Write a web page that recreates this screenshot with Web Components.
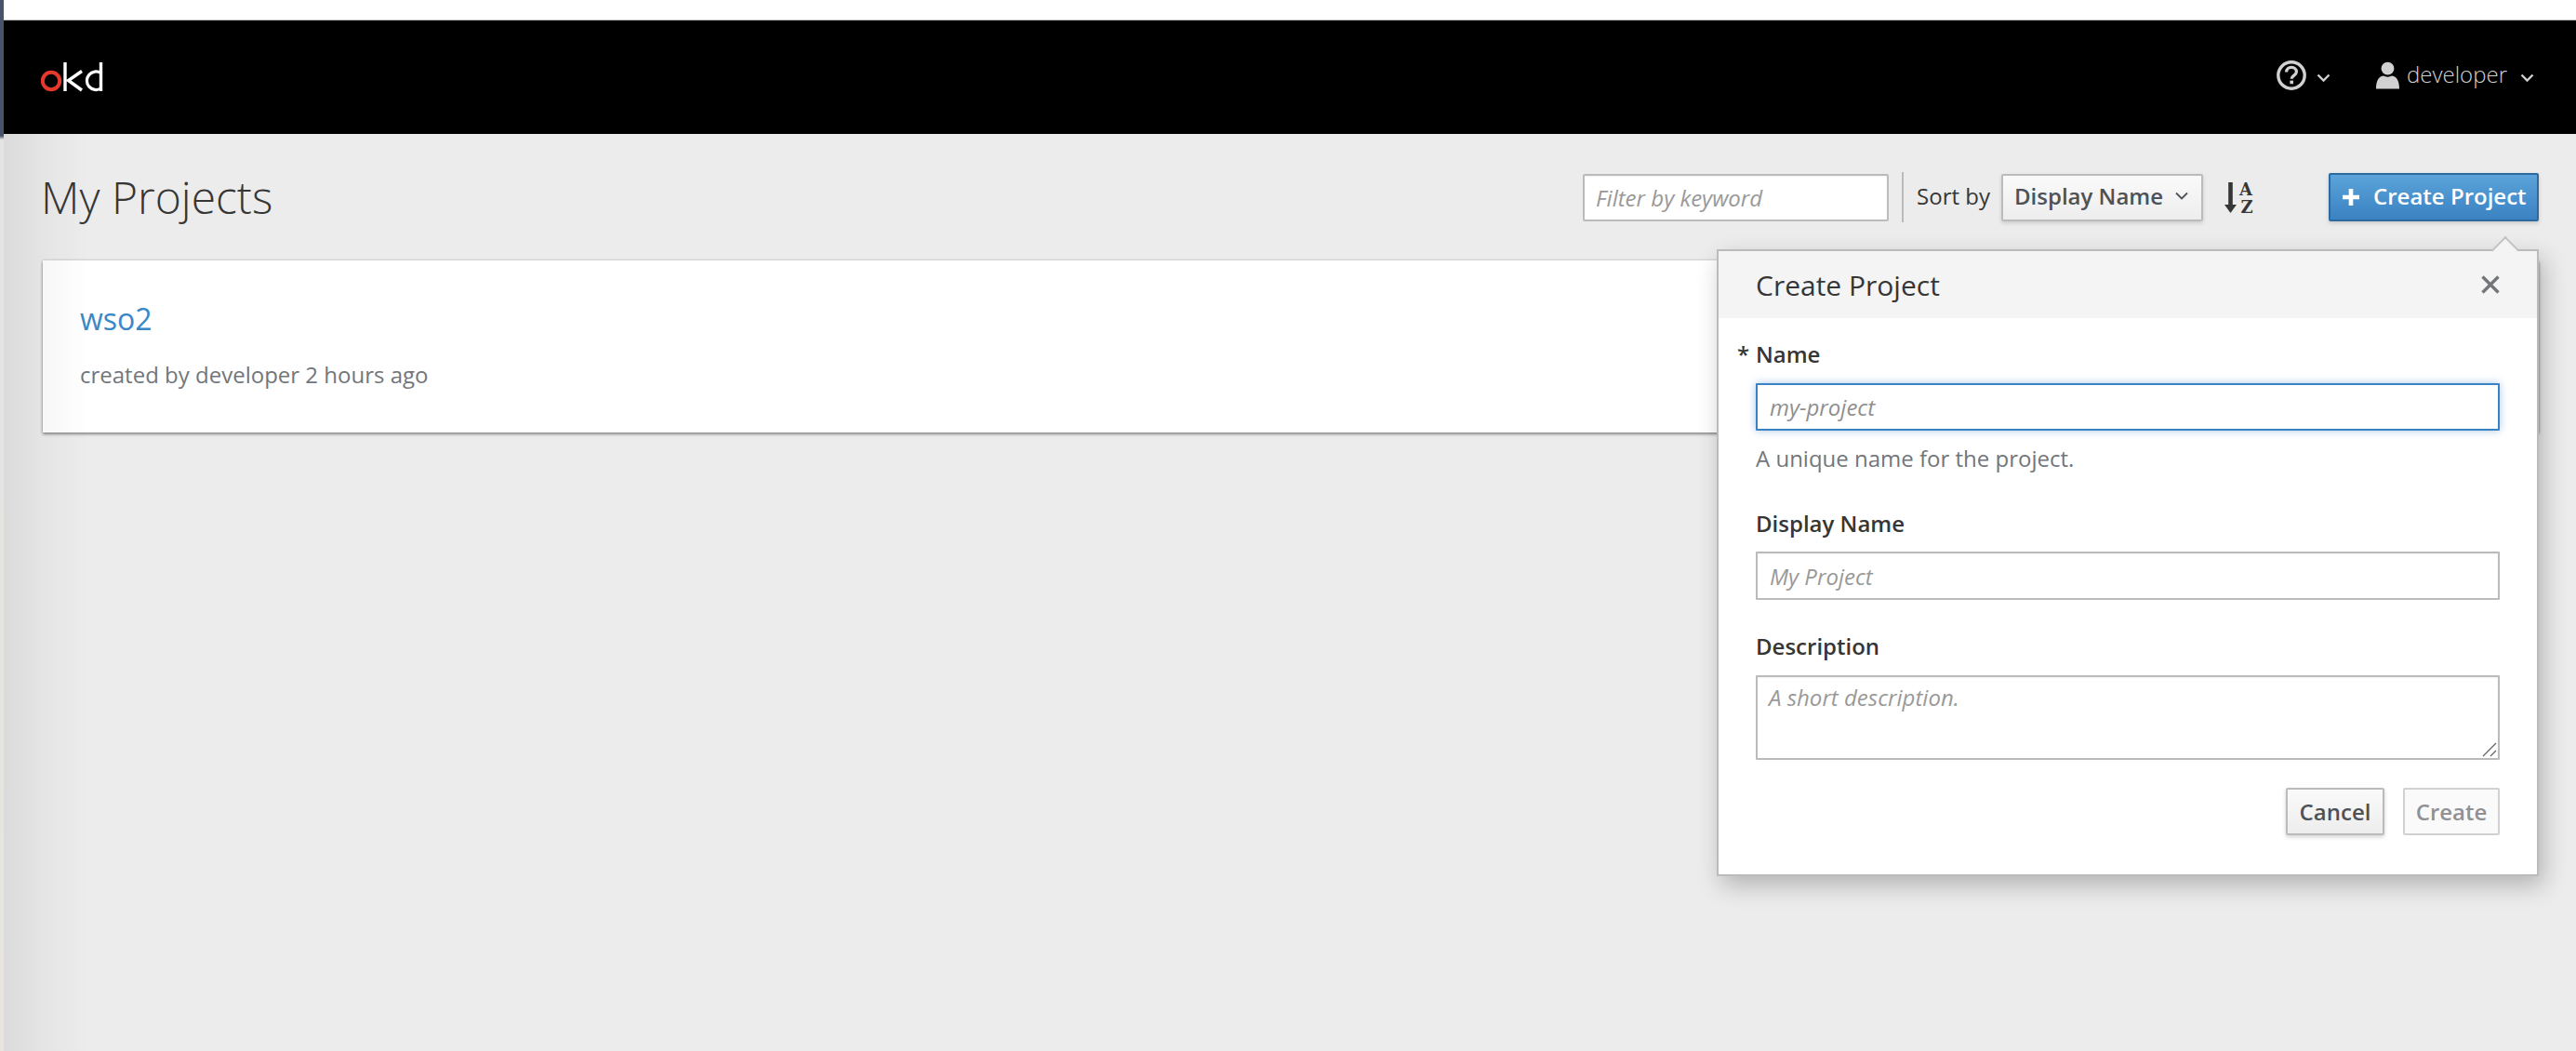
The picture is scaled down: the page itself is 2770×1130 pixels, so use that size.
<!DOCTYPE html>
<html lang="en">
<head>
<meta charset="utf-8">
<title>My Projects</title>
<style>
  html, body { margin: 0; height: 100%; overflow: hidden; }
  body { font-family: "Open Sans", "Liberation Sans", sans-serif; font-size: 24px; color: #363636; }
</style>
</head>
<body>
<okd-app>
  <okd-navbar slot="nav" user="developer"></okd-navbar>
  <okd-toolbar slot="page" heading="My Projects"></okd-toolbar>
  <okd-project-card slot="page" name="wso2">created by developer 2 hours ago</okd-project-card>
  <okd-create-popover slot="overlay"></okd-create-popover>
</okd-app>

<script>
// 페이지 전체 틀: 왼쪽 창 가장자리, 상단 흰 띠, 내비게이션, 본문
class OkdApp extends HTMLElement {
  constructor() {
    super();
    this.attachShadow({ mode: "open" });
    this.shadowRoot.innerHTML = `
      <style>
        :host { display: flex; width: 2770px; height: 1130px; background: #ececec; overflow: hidden; }
        .edge { width: 4px; flex: none; background: linear-gradient(#47536a 0, #47536a 146px, #e2e3e3 150px, #e8e5de 100%); }
        .main { flex: 1; display: flex; flex-direction: column; min-width: 0; }
        .top { height: 21px; flex: none; background: #fff; border-bottom: 1px solid #bdbdbd; }
        .page { flex: 1; position: relative; padding: 42px 40px 0 42px; }
        .fade { position: absolute; left: 0; top: 0; bottom: 0; width: 92px; pointer-events: none;
                background: linear-gradient(90deg, rgba(0,0,0,.075), rgba(0,0,0,.03) 45%, rgba(0,0,0,0)); }
      </style>
      <div class="edge"></div>
      <div class="main">
        <div class="top"></div>
        <slot name="nav"></slot>
        <div class="page">
          <slot name="page"></slot>
          <div class="fade"></div>
          <slot name="overlay"></slot>
        </div>
      </div>`;
  }
}

class OkdNavbar extends HTMLElement {
  constructor() {
    super();
    this.attachShadow({ mode: "open" });
  }
  connectedCallback() {
    const chevron = `<svg class="chev" width="15" height="10" viewBox="0 0 15 10"><path d="M1.5 1.5 7.5 7.5 13.5 1.5" fill="none" stroke="#cfcfcf" stroke-width="2.4"/></svg>`;
    this.shadowRoot.innerHTML = `
      <style>
        :host { display: flex; align-items: center; height: 122px; flex: none; background: #000; color: #d1d1d1; padding: 0 45px 0 40px; }
        .logo { display: block; }
        .right { margin-left: auto; display: flex; align-items: center; font-size: 24px; font-weight: 300; margin-top: -5px; }
        .help { display: flex; align-items: center; gap: 11px; margin-right: 49px; }
        .user { display: flex; align-items: center; }
        .name { margin: 0 14px 0 8px; position: relative; top: -1px; }
        .chev { margin-top: 6px; }
      </style>
      <svg class="logo" width="68" height="34" viewBox="0 0 68 34" role="img" aria-label="okd">
        <circle cx="11" cy="21" r="9.2" fill="none" stroke="#e5392d" stroke-width="4"/>
        <path d="M26 1V32" stroke="#fff" stroke-width="3.4"/>
        <path d="M44 10.5 29.5 20.5 44 31" fill="none" stroke="#fff" stroke-width="3.4"/>
        <path d="M64.5 12.5A9.8 9.8 0 1 0 64.5 29" fill="none" stroke="#fff" stroke-width="3.2"/>
        <path d="M64.5 1V32" stroke="#fff" stroke-width="3.4"/>
      </svg>
      <div class="right">
        <div class="help">
          <svg width="32" height="32" viewBox="0 0 32 32">
            <circle cx="16" cy="16" r="14.2" fill="none" stroke="#d1d1d1" stroke-width="3.4"/>
            <path d="M10.6 12.4C10.6 9.2 13 7.4 16 7.4s5.4 1.8 5.4 4.8c0 4-5.2 3.9-5.2 7.6" fill="none" stroke="#d1d1d1" stroke-width="3.2"/>
            <rect x="14.4" y="21.6" width="3.6" height="3.6" fill="#d1d1d1"/>
          </svg>
          ${chevron}
        </div>
        <div class="user">
          <svg width="25" height="30" viewBox="0 0 26 30">
            <circle cx="13" cy="7.4" r="7.2" fill="#d1d1d1"/>
            <path d="M0 30C0 21 3 16.5 8 15.5c3 1.6 7 1.6 10 0C23 16.5 26 21 26 30Z" fill="#d1d1d1"/>
          </svg>
          <span class="name">${this.getAttribute("user")}</span>
          ${chevron}
        </div>
      </div>`;
  }
}

// 제목, 필터, 정렬, 생성 버튼 줄
class OkdToolbar extends HTMLElement {
  constructor() {
    super();
    this.attachShadow({ mode: "open" });
  }
  connectedCallback() {
    this.shadowRoot.innerHTML = `
      <style>
        :host { display: flex; align-items: center; height: 52px; }
        h1 { margin: 0 0 0 -2px; font-size: 48px; font-weight: 300; color: #363636; line-height: 52px; }
        .tools { margin-left: auto; display: flex; align-items: center; }
        .filter { width: 329px; height: 51px; box-sizing: border-box; background: #fff; border: 2px solid #bbb; border-radius: 2px;
                  padding: 0 12px; display: flex; align-items: center; font-style: italic; font-size: 24px; color: #999; box-shadow: inset 0 1px 2px rgba(0,0,0,.06); }
        .sep { width: 2px; height: 54px; background: #bbb; margin: 0 14px 0 14px; }
        .sort { margin-right: 12px; font-size: 24px; color: #363636; position: relative; top: -2px; }
        .drop { width: 217px; height: 51px; box-sizing: border-box; border: 2px solid #bbb; border-radius: 2px;
                background: linear-gradient(#fafafa, #ededed); box-shadow: 0 2px 4px rgba(0,0,0,.14);
                display: flex; align-items: center; padding: 0 12px 4px; font-weight: 600; font-size: 24px; color: #4d5258; }
        .drop svg { margin-left: auto; margin-right: 2px; }
        .az { width: 34px; height: 40px; margin: 0 78px 0 23px; display: block; }
        .az text { font-family: "DejaVu Serif", "Liberation Serif", serif; font-weight: 700; font-size: 18px; fill: #363636; }
        .create { width: 226px; height: 52px; box-sizing: border-box; border: 2px solid #2c6a9f; border-radius: 2px;
                  background: linear-gradient(#5ba3da, #3a82c1); box-shadow: 0 2px 4px rgba(0,0,0,.16);
                  display: flex; align-items: center; padding: 0 12px 3px; color: #fff; font-weight: 600; font-size: 24px; white-space: nowrap; }
        .create svg { margin-right: 14px; margin-top: 3px; flex: none; }
      </style>
      <h1>${this.getAttribute("heading")}</h1>
      <div class="tools">
        <div class="filter">Filter by keyword</div>
        <div class="sep"></div>
        <span class="sort">Sort by</span>
        <div class="drop">Display Name
          <svg width="14" height="9" viewBox="0 0 14 9"><path d="M1 1.5 7 7.5 13 1.5" fill="none" stroke="#4d5258" stroke-width="1.8"/></svg>
        </div>
        <svg class="az" viewBox="0 0 34 40">
          <path d="M6.5 4V30" stroke="#363636" stroke-width="4.6"/>
          <path d="M0 28H13L6.5 37Z" fill="#363636"/>
          <text x="16" y="18">A</text>
          <text x="17.5" y="37">Z</text>
        </svg>
        <div class="create">
          <svg width="20" height="20" viewBox="0 0 20 20"><path d="M10 1V19M1 10H19" stroke="#fff" stroke-width="4.6"/></svg>
          Create Project
        </div>
      </div>`;
  }
}

class OkdProjectCard extends HTMLElement {
  constructor() {
    super();
    this.attachShadow({ mode: "open" });
  }
  connectedCallback() {
    this.shadowRoot.innerHTML = `
      <style>
        :host { display: block; height: 185px; box-sizing: border-box; margin-top: 42px; padding: 41px 40px 0 40px; background: #fff;
                box-shadow: 0 2px 3px rgba(0,0,0,.38), 0 0 3px rgba(0,0,0,.2); }
        a { display: block; font-size: 32px; line-height: 44px; color: #3a87c8; text-decoration: none; }
        p { margin: 20px 0 0; font-size: 24px; line-height: 36px; color: #72767b; }
      </style>
      <a>${this.getAttribute("name")}</a>
      <p><slot></slot></p>`;
  }
}

// 입력 칸 한 줄: 라벨, 칸, 도움말
class OkdField extends HTMLElement {
  constructor() {
    super();
    this.attachShadow({ mode: "open" });
  }
  connectedCallback() {
    const hint = this.getAttribute("hint");
    const multi = this.hasAttribute("multiline");
    this.shadowRoot.innerHTML = `
      <style>
        :host { display: block; }
        .label { display: flex; height: 36px; box-sizing: border-box; padding-bottom: 5px; align-items: center; font-weight: 600; font-size: 24px; color: #363636; }
        :host([required]) .label { padding-bottom: 7px; }
        :host([multiline]) .label { padding-bottom: 4px; }
        .star { width: 20px; margin-left: -20px; }
        .box { box-sizing: border-box; height: 52px; margin-top: 10px; border: 2px solid #bbb; border-radius: 1px; background: #fff; position: relative;
               padding: 0 13px; display: flex; align-items: center; font-style: italic; font-size: 24px; color: #999; box-shadow: inset 0 1px 2px rgba(0,0,0,.05); }
        :host([focused]) .box { border-color: #3a82c4; height: 51px; color: #8f8f8f; box-shadow: 0 0 8px rgba(58,130,196,.45); }
        :host([multiline]) .box { height: 91px; margin-top: 12px; align-items: flex-start; padding: 5px 12px; }
        .grip { position: absolute; right: 1px; bottom: 1px; }
        .hint { margin: 12px 0 1px; line-height: 36px; font-size: 24px; color: #72767b; }
      </style>
      <div class="label">${this.hasAttribute("required") ? '<span class="star">*</span>' : ""}${this.getAttribute("label")}</div>
      <div class="box">${this.getAttribute("placeholder")}${multi ? `
        <svg class="grip" width="16" height="16" viewBox="0 0 16 16"><path d="M1 15 15 1M9 15 15 9" stroke="#666" stroke-width="1.3"/></svg>` : ""}</div>
      ${hint ? `<div class="hint">${hint}</div>` : ""}`;
  }
}

// 프로젝트 생성 팝오버 (버튼 아래에 겹쳐 뜸)
class OkdCreatePopover extends HTMLElement {
  constructor() {
    super();
    this.attachShadow({ mode: "open" });
    this.shadowRoot.innerHTML = `
      <style>
        :host { position: absolute; top: 124px; right: 40px; width: 884px; height: 674px; box-sizing: border-box; display: flex; flex-direction: column;
                background: #fff; border: 2px solid #bbb; box-shadow: 5px 10px 24px rgba(0,0,0,.24); z-index: 2; }
        .arrow { position: absolute; top: -12px; right: 24px; width: 18px; height: 18px; background: #f4f4f4; border: 2px solid #c2c2c2; border-right: 0; border-bottom: 0; transform: rotate(45deg); }
        header { height: 72px; flex: none; box-sizing: border-box; background: #f4f4f4; display: flex; align-items: center; padding: 0 40px 0 40px; font-size: 30px; color: #363636; position: relative; }
        header svg { margin-left: auto; }
        .body { padding: 24px 40px 0 40px; }
        okd-field[label="Display Name"] { margin-top: 36px; }
        okd-field[label="Description"] { margin-top: 33px; }
        .actions { display: flex; justify-content: flex-end; gap: 20px; margin-top: 30px; }
        .btn { box-sizing: border-box; height: 51px; border: 2px solid #bbb; border-radius: 2px; display: flex; align-items: center; justify-content: center; font-weight: 600; font-size: 24px; }
        .cancel { width: 106px; color: #4d5258; background: linear-gradient(#fafafa, #ededed); box-shadow: 0 2px 4px rgba(0,0,0,.18); }
        .create { width: 104px; color: #8f9195; background: #fafafa; border-color: #d1d1d1; }
      </style>
      <div class="arrow"></div>
      <header>Create Project
        <svg width="20" height="20" viewBox="0 0 20 20"><path d="M1.5 1.5 18.5 18.5M18.5 1.5 1.5 18.5" stroke="#72767b" stroke-width="3.4"/></svg>
      </header>
      <div class="body">
        <okd-field label="Name" required focused placeholder="my-project" hint="A unique name for the project."></okd-field>
        <okd-field label="Display Name" placeholder="My Project"></okd-field>
        <okd-field label="Description" multiline placeholder="A short description."></okd-field>
        <div class="actions">
          <div class="btn cancel">Cancel</div>
          <div class="btn create">Create</div>
        </div>
      </div>`;
  }
}

customElements.define("okd-field", OkdField);
customElements.define("okd-navbar", OkdNavbar);
customElements.define("okd-toolbar", OkdToolbar);
customElements.define("okd-project-card", OkdProjectCard);
customElements.define("okd-create-popover", OkdCreatePopover);
customElements.define("okd-app", OkdApp);
</script>
</body>
</html>
